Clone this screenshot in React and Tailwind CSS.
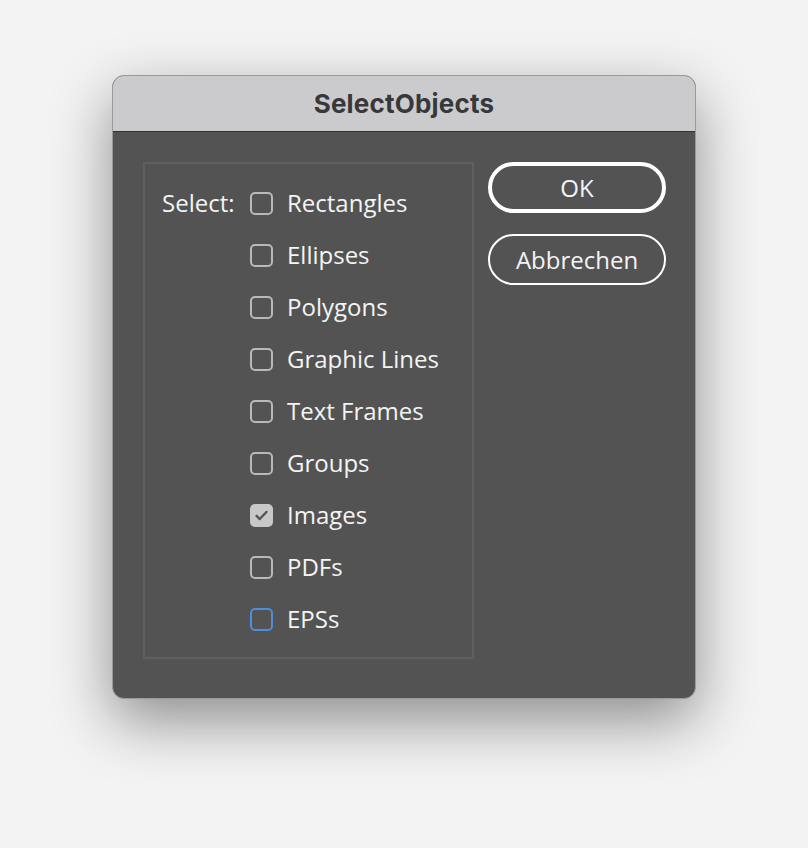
import React from "react";

const items = [
  { label: "Rectangles" },
  { label: "Ellipses" },
  { label: "Polygons" },
  { label: "Graphic Lines" },
  { label: "Text Frames" },
  { label: "Groups" },
  { label: "Images", checked: true },
  { label: "PDFs" },
  { label: "EPSs", focused: true },
];

function Checkbox({ checked, focused }) {
  if (checked) {
    return (
      <span className="flex h-[23px] w-[23px] shrink-0 items-center justify-center rounded-[5px] bg-[#c8c8c8]">
        <svg viewBox="0 0 24 24" className="h-[17px] w-[17px]" fill="none">
          <path
            d="M5 12.5l4.5 4.5L19 7"
            stroke="#555555"
            strokeWidth="3.4"
            strokeLinecap="round"
            strokeLinejoin="round"
          />
        </svg>
      </span>
    );
  }
  return (
    <span
      className={
        focused
          ? "block h-[23px] w-[23px] shrink-0 rounded-[5px] border-2 border-[#4a8fdc]"
          : "block h-[23px] w-[23px] shrink-0 rounded-[5px] border-2 border-[#b9b9b9]"
      }
    ></span>
  );
}

export default function App() {
  return (
    <div className="min-h-[848px] w-[808px] bg-[#f3f3f3] pt-[75px] pl-[112px]">
      <div className="w-[584px] h-[624px] overflow-hidden rounded-[12px] border border-[#9a9a9a] bg-[#535353] shadow-[0_22px_60px_rgba(0,0,0,0.42)]">
        {/* title bar */}
        <div className="flex h-[56px] items-center justify-center border-b border-[#333333] bg-[#cbcbcd]">
          <span className="font-['Inter',sans-serif] text-[26px] font-bold tracking-[0.2px] text-[#38383a]">
            SelectObjects
          </span>
        </div>

        <div className="flex pl-[30px] pt-[30px] font-['Open_Sans',sans-serif] text-[24px] font-medium text-[#f4f4f4]">
          {/* group box */}
          <div className="flex h-[497px] w-[331px] border-2 border-[#5f5f5f] pl-[17px] pt-[13px]">
            <div className="w-[88px] shrink-0">
              <div className="flex h-[52px] items-center">Select:</div>
            </div>
            <div className="flex flex-col">
              {items.map((it) => (
                <div key={it.label} className="flex h-[52px] items-center gap-[14px]">
                  <Checkbox checked={it.checked} focused={it.focused} />
                  <span className="leading-none">{it.label}</span>
                </div>
              ))}
            </div>
          </div>

          {/* buttons */}
          <div className="ml-[14px] flex w-[178px] flex-col gap-[21px]">
            <button className="flex h-[51px] items-center justify-center rounded-full border-4 border-white text-[24px] text-[#f4f4f4]">
              OK
            </button>
            <button className="flex h-[51px] items-center justify-center rounded-full border-2 border-white text-[24px] text-[#f4f4f4]">
              Abbrechen
            </button>
          </div>
        </div>
      </div>
    </div>
  );
}
